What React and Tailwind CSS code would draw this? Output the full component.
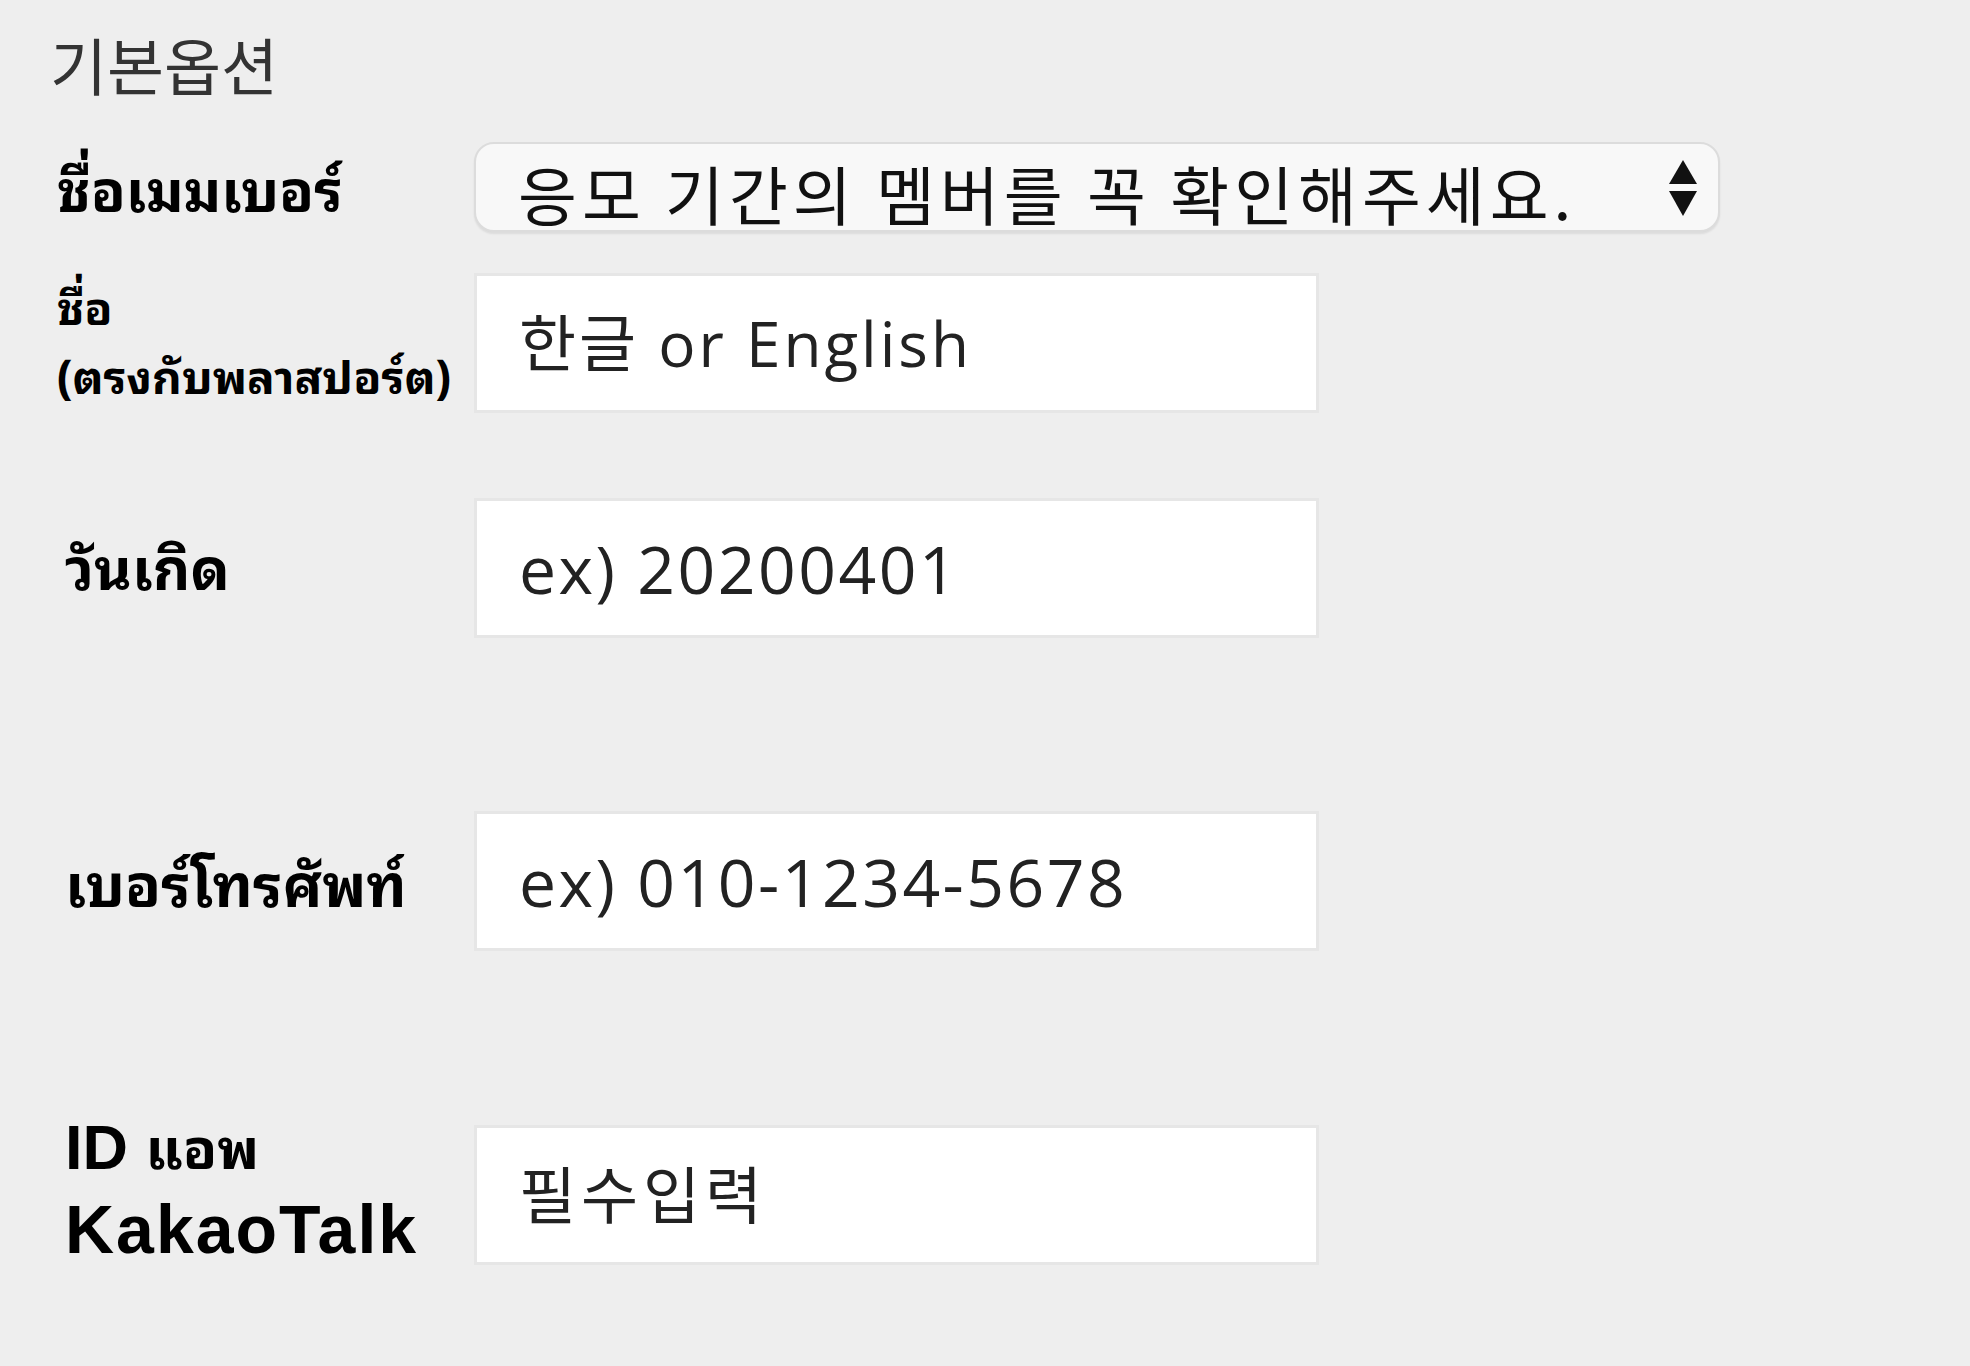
const thai = {
  fontFamily:
    '"Noto Sans Thai Looped", "Noto Serif Thai", Loma, Garuda, "Noto Sans Thai", "Liberation Sans", sans-serif',
};

function Label({ children, className = "" }) {
  return (
    <div
      className={`w-[474px] shrink-0 pl-[57px] font-bold text-black ${className}`}
      style={thai}
    >
      {children}
    </div>
  );
}

function TextBox({ placeholder, size = "text-[62px] tracking-[5px]" }) {
  return (
    <input
      type="text"
      placeholder={placeholder}
      className={`h-[140px] w-[845px] border-[3px] border-[#e6e6e6] bg-white pl-[42px] font-['Open_Sans','Noto_Sans_CJK_KR',sans-serif] text-[#222] outline-none placeholder:text-[#222] ${size}`}
    />
  );
}

export default function App() {
  return (
    <div className="min-h-[1366px] w-[1970px] bg-[#eeeeee] font-['Noto_Sans_CJK_KR',sans-serif]">
      <div className="pt-[24px] pl-[50px] text-[62px] leading-[80px] text-[#333]">
        기본옵션
      </div>

      <div className="mt-[38px] flex items-center">
        <Label className="text-[57px] leading-[70px]">ชื่อเมมเบอร์</Label>
        <div className="relative h-[90px] w-[1246px] rounded-[20px] border-2 border-[#dcdcdc] bg-[#f8f8f8] shadow-[0_2px_2px_rgba(0,0,0,0.08)]">
          <select
            className="h-full w-full appearance-none bg-transparent pl-[42px] text-[64px] tracking-[5px] text-[#111] outline-none"
            defaultValue="0"
          >
            <option value="0">응모 기간의 멤버를 꼭 확인해주세요.</option>
          </select>
          <svg
            className="pointer-events-none absolute right-[20px] top-[16px]"
            width="30"
            height="56"
            viewBox="0 0 30 56"
          >
            <path d="M15 0 L29 24 L1 24 Z" fill="#111" />
            <path d="M1 31 L29 31 L15 56 Z" fill="#111" />
          </svg>
        </div>
      </div>

      <div className="mt-[41px] flex items-center">
        <Label className="flex h-[140px] flex-col justify-center pb-[8px] text-[46px] leading-[69px]">
          <div>ชื่อ</div>
          <div>(ตรงกับพลาสปอร์ต)</div>
        </Label>
        <TextBox placeholder="한글 or English" size="text-[62px] tracking-[3px]" />
      </div>

      <div className="mt-[85px] flex items-center">
        <Label className="pb-[8px] pl-[65px] text-[58px] leading-[72px]">วันเกิด</Label>
        <TextBox placeholder="ex) 20200401" size="text-[66px] tracking-[2.5px]" />
      </div>

      <div className="mt-[173px] flex items-center">
        <Label className="pl-[65px] text-[59px] leading-[72px]">เบอร์โทรศัพท์</Label>
        <TextBox placeholder="ex) 010-1234-5678" size="text-[66px] tracking-[2.5px]" />
      </div>

      <div className="mt-[174px] flex items-center">
        <Label className="flex h-[140px] flex-col justify-center pb-[18px] pl-[65px] text-[68px] leading-[82px]">
          <div className="font-['Liberation_Sans',sans-serif] text-[63px]">
            ID <span style={thai} className="text-[56px]">แอพ</span>
          </div>
          <div className="font-['Liberation_Sans',sans-serif] tracking-[2px]">KakaoTalk</div>
        </Label>
        <TextBox placeholder="필수입력" />
      </div>
    </div>
  );
}
